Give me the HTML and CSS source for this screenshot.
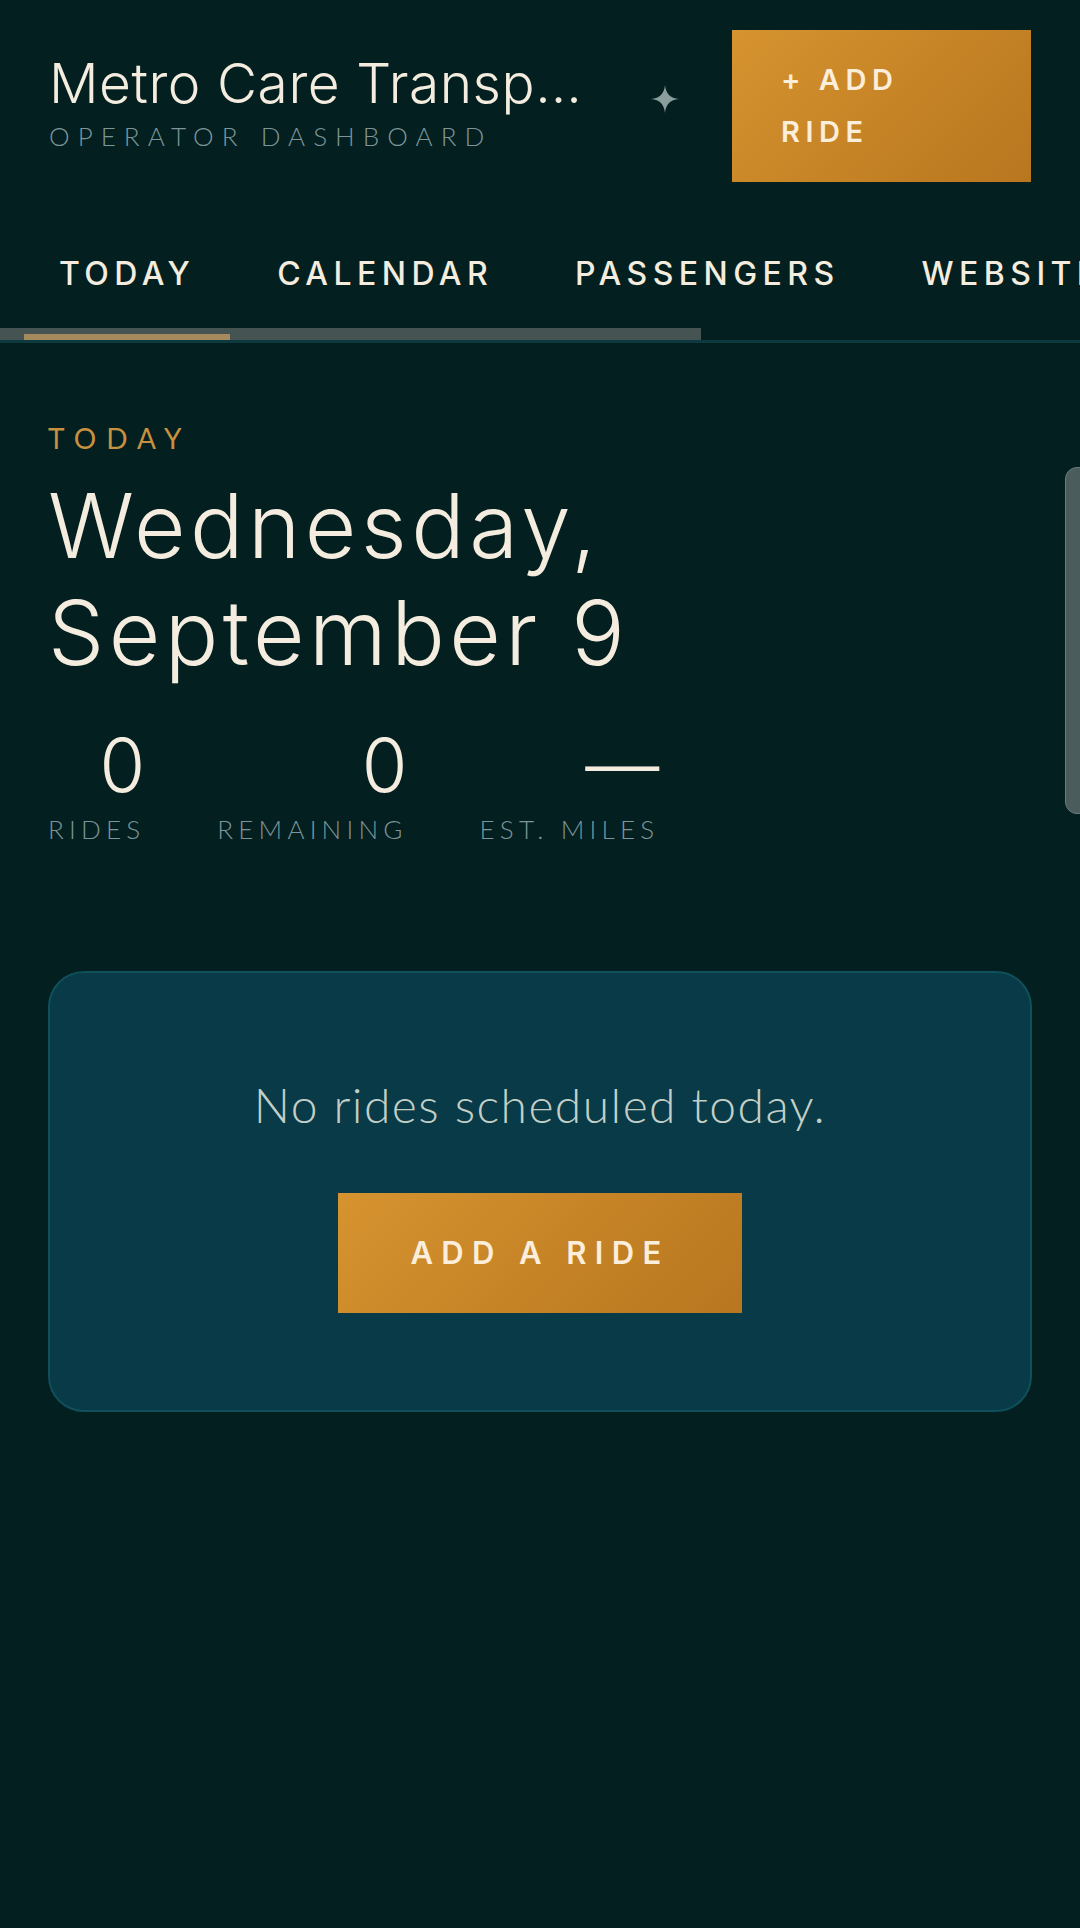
FILE: index.html
```html
<!DOCTYPE html>
<html lang="en">
<head>
    <meta charset="UTF-8">
    <meta name="viewport" content="width=device-width, initial-scale=1.0">
    <title>Metro Care Transportation - Operator Dashboard</title>
    <link rel="stylesheet" href="styles.css">
</head>
<body>
    <header class="topbar">
        <div class="brand">
            <h1 class="brand-name" title="Metro Care Transportation">Metro Care Transp…</h1>
            <div class="brand-sub">Operator Dashboard</div>
        </div>
        <svg class="sparkle" width="28" height="28" viewBox="0 0 28 28"><path d="M14 0C15 9 19 13 28 14C19 15 15 19 14 28C13 19 9 15 0 14C9 13 13 9 14 0Z"></path></svg>
        <button class="btn btn-top">+ Add Ride</button>
    </header>

    <nav class="tabs">
        <a class="tab active" href="#">Today</a>
        <a class="tab" href="#">Calendar</a>
        <a class="tab" href="#">Passengers</a>
        <a class="tab" href="#">Website</a>
    </nav>

    <main class="content">
        <div class="eyebrow">Today</div>
        <h2 class="date">Wednesday,<br>September 9</h2>

        <div class="stats">
            <div class="stat">
                <div class="stat-num">0</div>
                <div class="stat-label">Rides</div>
            </div>
            <div class="stat">
                <div class="stat-num">0</div>
                <div class="stat-label">Remaining</div>
            </div>
            <div class="stat">
                <div class="stat-num">&mdash;</div>
                <div class="stat-label">Est. Miles</div>
            </div>
        </div>

        <section class="empty">
            <p class="empty-text">No rides scheduled today.</p>
            <button class="btn btn-big">Add a Ride</button>
        </section>
    </main>

    <div class="scroll-thumb"></div>
</body>
</html>
```

FILE: styles.css
```css
html, body {
    overflow-x: hidden;
}
body {
    margin: 0;
    min-height: 100vh;
    background-color: #031f20;
    color: #f4eddf;
    font-family: 'Inter', 'Liberation Sans', sans-serif;
    position: relative;
}

/* header */
.topbar {
    display: flex;
    align-items: center;
    padding: 30px 49px 0 49px;
}
.brand {
    flex: 1;
    min-width: 0;
    margin-bottom: 8px;
}
.brand-name {
    margin: 0;
    font-size: 55px;
    font-weight: 300;
    line-height: 62px;
    letter-spacing: 0.01em;
    color: #f4eddf;
    white-space: nowrap;
}
.brand-sub {
    margin-top: 6px;
    font-family: 'Lato', 'Liberation Sans', sans-serif;
    font-weight: 300;
    font-size: 26px;
    letter-spacing: 0.31em;
    text-transform: uppercase;
    color: #7d9598;
}
.sparkle {
    flex-shrink: 0;
    margin: -14px 53px 0 40px;
    fill: #8a9e9e;
}

.btn {
    border: none;
    cursor: pointer;
    font-family: 'Inter', 'Liberation Sans', sans-serif;
    font-weight: 600;
    text-transform: uppercase;
    color: #fbeedb;
    background: linear-gradient(135deg, #d6932f 0%, #b8761f 100%);
}
.btn-top {
    flex-shrink: 0;
    width: 299px;
    padding: 24px 49px;
    font-size: 29px;
    line-height: 52px;
    letter-spacing: 0.19em;
    text-align: left;
}

/* tabs */
.tabs {
    display: flex;
    gap: 12px;
    margin-top: 32px;
    padding-left: 24px;
    overflow: hidden;
    white-space: nowrap;
    border-bottom: 3px solid #0c3a3e;
    background: linear-gradient(#455352, #455352) no-repeat 0 100% / 701px 12px;
}
.tab {
    flex-shrink: 0;
    padding: 41px 35px;
    font-size: 32px;
    font-weight: 500;
    line-height: 38px;
    letter-spacing: 0.17em;
    text-transform: uppercase;
    text-decoration: none;
    color: #f4eddf;
    border-bottom: 6px solid transparent;
}
.tab.active {
    border-bottom-color: #a58a5e;
}

/* main */
.content {
    padding: 78px 48px 0 48px;
}
.eyebrow {
    font-family: 'Lato', 'Liberation Sans', sans-serif;
    font-size: 28px;
    line-height: 34px;
    letter-spacing: 0.36em;
    text-transform: uppercase;
    color: #c8913f;
}
.date {
    margin: 17px 0 0 0;
    font-size: 89px;
    font-weight: 300;
    line-height: 107px;
    letter-spacing: 0.05em;
    color: #f4eddf;
}

.stats {
    display: flex;
    gap: 72px;
    margin-top: 40px;
}
.stat {
    text-align: right;
}
.stat-num {
    font-size: 74px;
    font-weight: 300;
    line-height: 78px;
}
.stat-label {
    margin-top: 10px;
    font-family: 'Lato', 'Liberation Sans', sans-serif;
    font-weight: 300;
    font-size: 26px;
    line-height: 30px;
    letter-spacing: 0.2em;
    text-transform: uppercase;
    color: #7d9598;
}

.empty {
    margin-top: 127px;
    padding: 97px 40px;
    text-align: center;
    background-color: #083a47;
    border: 2px solid #0f505b;
    border-radius: 36px;
}
.empty-text {
    margin: 0 0 54px 0;
    font-family: 'Lato', 'Liberation Sans', sans-serif;
    font-weight: 300;
    font-size: 48px;
    line-height: 69px;
    letter-spacing: 0.03em;
    color: #c3cfc6;
}
.btn-big {
    padding: 41px 72px;
    font-size: 31px;
    line-height: 38px;
    letter-spacing: 0.27em;
}

/* overlay scroll thumb on the right edge */
.scroll-thumb {
    position: absolute;
    top: 467px;
    right: -14px;
    width: 27px;
    height: 345px;
    border-radius: 12px;
    background-color: #4a5c5c;
    border: 1px solid #6b7b7b;
}
```
